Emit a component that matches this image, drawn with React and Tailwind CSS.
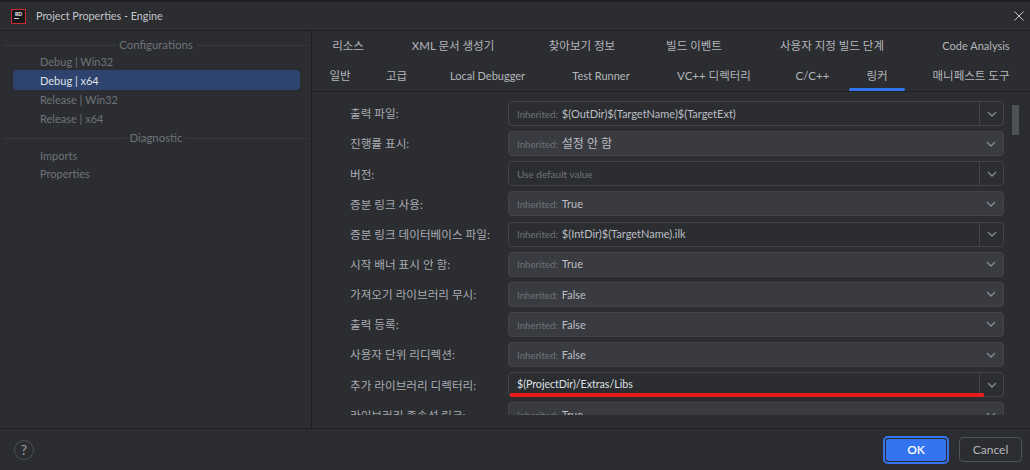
const row1 = [
  ["리소스", "w-[72px]"],
  ["XML 문서 생성기", "w-[138px]"],
  ["찾아보기 정보", "w-[120px]"],
  ["빌드 이벤트", "w-[104px]"],
  ["사용자 지정 빌드 단계", "w-[172px]"],
  ["Code Analysis", "w-[106px] ml-[5px] text-[11px]"],
];
const row2 = [
  ["일반", "w-[56px]"],
  ["고급", "w-[57px]"],
  ["Local Debugger", "w-[125px] text-[11px]"],
  ["Test Runner", "w-[102px] text-[11px]"],
  ["VC++ 디렉터리", "w-[124px]"],
  ["C/C++", "w-[73px]"],
  ["링커", "w-[56px]", true],
  ["매니페스트 도구", "w-[112px] ml-[10px]"],
];

const rows = [
  { label: "출력 파일:", inh: true, value: "$(OutDir)$(TargetName)$(TargetExt)", kind: "edit" },
  { label: "진행률 표시:", inh: true, value: "설정 안 함", kind: "select", ko: true },
  { label: "버전:", placeholder: "Use default value", kind: "edit" },
  { label: "증분 링크 사용:", inh: true, value: "True", kind: "select" },
  { label: "증분 링크 데이터베이스 파일:", inh: true, value: "$(IntDir)$(TargetName).ilk", kind: "edit" },
  { label: "시작 배너 표시 안 함:", inh: true, value: "True", kind: "select" },
  { label: "가져오기 라이브러리 무시:", inh: true, value: "False", kind: "select" },
  { label: "출력 등록:", inh: true, value: "False", kind: "select" },
  { label: "사용자 단위 리디렉션:", inh: true, value: "False", kind: "select" },
  { label: "추가 라이브러리 디렉터리:", value: "$(ProjectDir)/Extras/Libs", kind: "edit", bright: true, mark: true },
  { label: "라이브러리 종속성 링크:", inh: true, value: "True", kind: "select" },
];

function Chevron() {
  return (
    <svg width="10" height="6" viewBox="0 0 10 6" fill="none" className="text-[#868a91]">
      <path d="M1 1 L5 5 L9 1" stroke="currentColor" strokeWidth="1.3" />
    </svg>
  );
}

function Heading({ children }) {
  return (
    <div className="flex items-center h-[18px] pl-[5px] pr-[4px] gap-[3px] text-[11.4px] text-[#6f737a]">
      <div className="flex-1 h-px bg-[#393b40]" />
      <span>{children}</span>
      <div className="flex-1 h-px bg-[#393b40]" />
    </div>
  );
}

function Item({ children, cls }) {
  return <div className={"ml-[13px] mr-[11px] pl-[27px] flex items-center text-[11px] " + cls}>{children}</div>;
}

function Tab({ text, w, active }) {
  return (
    <div className={"relative h-[30px] flex items-center justify-center whitespace-nowrap shrink-0 " + w}>
      {text}
      {active && <div className="absolute left-0 right-0 bottom-0 h-[3px] rounded-[2px] bg-[#3574f0]" />}
    </div>
  );
}

function valueClass(r) {
  if (r.bright) return "text-[10.6px] text-[#dfe1e5]";
  if (r.ko) return "text-[12px] text-[#bcbec4]";
  return "text-[11px] text-[#bcbec4]";
}

function Field({ r }) {
  const isEdit = r.kind === "edit";
  return (
    <div
      className={
        "relative flex-1 h-[25px] flex items-center rounded-[4px] border border-[#43454a] " +
        (isEdit ? "bg-[#2b2d30]" : "bg-[#393b40]")
      }
    >
      <div className="flex-1 pl-[8px] pt-[1px] flex items-baseline whitespace-nowrap overflow-hidden">
        {r.inh && <span className="text-[9.7px] text-[#6f737a] mr-[4px]">Inherited:</span>}
        {r.placeholder && <span className="text-[10px] text-[#6f737a]">{r.placeholder}</span>}
        {r.value && <span className={valueClass(r)}>{r.value}</span>}
      </div>
      <div className={"w-[24px] h-full flex items-center justify-center " + (isEdit ? "border-l border-[#43454a]" : "")}>
        <Chevron />
      </div>
      {r.mark && <div className="absolute left-[1px] right-[19px] top-[20px] h-[4px] rounded-[1px] bg-[#e81c1c]" />}
    </div>
  );
}

export default function App() {
  return (
    <div
      className="w-[1030px] h-[470px] overflow-hidden flex flex-col bg-[#2b2d30] text-[#b4b6bc] text-[12px]"
      style={{ fontFamily: '"Lato", "Noto Sans CJK KR", sans-serif' }}
    >
      <div className="h-[2px] bg-[#1e1f22] shrink-0" />
      {/* title bar */}
      <div className="h-[29px] shrink-0 flex items-center pl-[11px] pr-[3px] border-b border-[#1e1f22]">
        <div className="w-[15px] h-[15px] border border-[#cc2a2e] bg-[#16171a] flex flex-col items-center pt-[1px] leading-none overflow-hidden">
          <span className="text-[5px] font-bold text-white leading-[6px]">RD</span>
          <div className="w-[5px] h-px bg-[#c8c8c8] mt-[1px] self-start ml-[2px]" />
        </div>
        <span className="ml-[10px] text-[10.8px] text-[#c3c5cb]">Project Properties - Engine</span>
        <svg width="10" height="10" viewBox="0 0 10 10" className="ml-auto mr-[3px] text-[#c3c5cb]">
          <path d="M0.5 0.5 L9.5 9.5 M9.5 0.5 L0.5 9.5" stroke="currentColor" strokeWidth="1" />
        </svg>
      </div>

      {/* main */}
      <div className="flex-1 min-h-0 flex border-b border-[#1e1f22]">
        {/* sidebar */}
        <div className="w-[312px] shrink-0 border-r border-[#1e1f22] pt-[5px]">
          <Heading>Configurations</Heading>
          <div className="flex flex-col">
            <Item cls="h-[16px] text-[#6f737a]">Debug | Win32</Item>
            <Item cls="h-[20px] pt-[2px] rounded-[4px] bg-[#2e436e] text-[#dfe1e5]">Debug | x64</Item>
            <Item cls="h-[20px] pt-[1px] text-[#6f737a]">Release | Win32</Item>
            <Item cls="h-[19px] text-[#6f737a]">Release | x64</Item>
          </div>
          <Heading>Diagnostic</Heading>
          <div className="flex flex-col">
            <Item cls="h-[18px] text-[#6f737a]">Imports</Item>
            <Item cls="h-[18px] text-[#6f737a]">Properties</Item>
          </div>
        </div>

        {/* right */}
        <div className="flex-1 min-w-0 flex flex-col">
          <div className="shrink-0 border-b border-[#1e1f22] text-[11.5px]">
            <div className="flex">
              {row1.map(([t, w]) => (
                <Tab key={t} text={t} w={w} />
              ))}
            </div>
            <div className="flex">
              {row2.map(([t, w, a]) => (
                <Tab key={t} text={t} w={w} active={a} />
              ))}
            </div>
          </div>
          <div className="flex-1 min-h-0 pb-[13px] flex">
            <div className="relative flex-1 min-w-0 overflow-hidden flex pt-[9px]">
              <div className="flex-1 min-w-0 flex flex-col gap-[5.15px] pl-[38px] pr-[26px]">
                {rows.map((r) => (
                  <div key={r.label} className="flex items-center shrink-0">
                    <div className="w-[158px] shrink-0 pt-[1px] whitespace-nowrap text-[#a8abb2] text-[11.6px]">{r.label}</div>
                    <Field r={r} />
                  </div>
                ))}
              </div>
              <div className="absolute top-[13px] left-[700px] w-[7px] h-[30px] bg-[#4e5157]" />
            </div>
          </div>
        </div>
      </div>

      {/* footer */}
      <div className="h-[41px] shrink-0 flex items-center pl-[14px] pr-[8px]">
        <div className="w-[20px] h-[20px] rounded-full border border-[#4e5157] flex items-center justify-center text-[14px] text-[#9da0a8]">
          ?
        </div>
        <button className="ml-auto w-[66px] h-[28px] rounded-[5px] border-2 border-[#3574f0] p-[1px] bg-[#2b2d30]">
          <div className="w-full h-full rounded-[3px] bg-[#3574f0] flex items-center justify-center text-white font-semibold text-[12px]">
            OK
          </div>
        </button>
        <button className="ml-[10px] w-[63px] h-[25px] rounded-[4px] border border-[#4e5157] text-[#b4b6bc] text-[12px]">
          Cancel
        </button>
      </div>
    </div>
  );
}
